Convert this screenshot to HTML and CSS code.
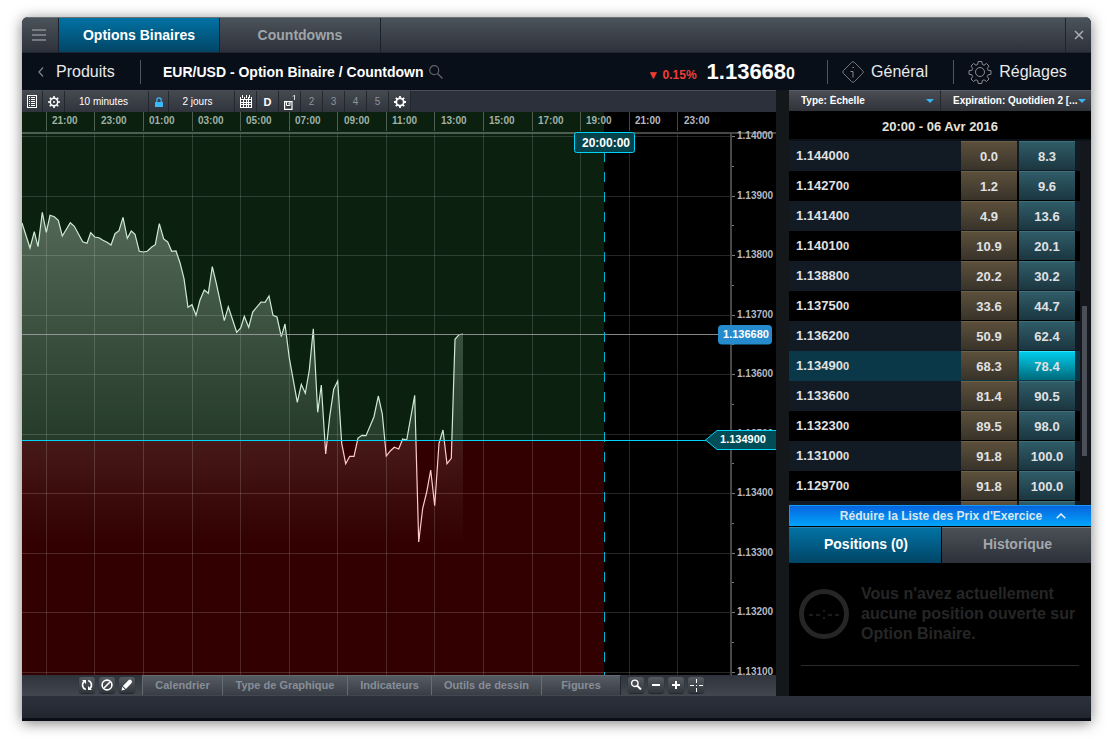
FILE: index.html
```html
<!DOCTYPE html>
<html lang="fr">
<head>
<meta charset="utf-8">
<title>Options Binaires</title>
<link rel="stylesheet" href="styles.css">
</head>
<body>
<main class="window">
  <nav class="tabbar">
    <button class="menu" aria-label="Menu"><svg width="14" height="13" viewBox="0 0 14 13"><path d="M0 1h14M0 6h14M0 11h14" stroke="#8a8f94" stroke-width="1.6"/></svg></button>
    <button class="tab active">Options Binaires</button>
    <button class="tab">Countdowns</button>
    <button class="close" aria-label="Fermer"><svg width="10" height="10" viewBox="0 0 10 10"><path d="M1 1l8 8M9 1L1 9" stroke="#a9adb1" stroke-width="1.5"/></svg></button>
  </nav>
  <header class="header">
    <a class="back" href="#"><svg width="6" height="10" viewBox="0 0 6 10"><path d="M5 0.500L1 5l4 4.500" fill="none" stroke="#7d8288" stroke-width="1.3"/></svg>Produits</a>
    <h1 class="title">EUR/USD - Option Binaire / Countdown</h1>
    <button class="search" aria-label="Rechercher"><svg width="14" height="14" viewBox="0 0 14 14"><circle cx="5.200" cy="5.200" r="4.500" fill="none" stroke="#5e6369" stroke-width="1.2"/><path d="M8.500 8.500l5 5" stroke="#5e6369" stroke-width="1.400"/></svg></button>
    <div class="quote"><span class="change">▼ 0.15%</span><span class="price">1.13668<small>0</small></span></div>
    <button class="action general"><svg width="22" height="22" viewBox="0 0 22 22" fill="none" stroke="#777b80" stroke-width="1"><path d="M9.600 1.400q1.400-1.400 2.800 0l8.200 8.200q1.400 1.400 0 2.800l-8.200 8.200q-1.400 1.400-2.800 0l-8.200-8.200q-1.400-1.400 0-2.800z"/><path d="M8.500 10.500h2.500v6M10.500 6.500h1.500" stroke="#8a8e92"/></svg>Général</button>
    <button class="action settings"><svg width="24" height="24" viewBox="0 0 24 24" fill="none" stroke="#8a8d91" stroke-width="1"><circle cx="12" cy="12" r="4.500"/><path d="M10.200 1.500h3.600l.5 2.900 1.700.8 2.500-1.700 2.500 2.500-1.700 2.500.8 1.800 2.900.4v3.500l-2.900.6-.8 1.700 1.700 2.500-2.500 2.500-2.500-1.700-1.700.8-.5 2.900h-3.600l-.5-2.900-1.700-.8-2.500 1.700L3 19l1.700-2.500-.8-1.700-2.900-.6v-3.500l2.900-.4.8-1.800L3 6l2.500-2.500L8 5.200l1.700-.8z"/></svg>Réglages</button>
  </header>
  <div class="workspace">
    <section class="chart-panel">
      <div class="tools">
        <button class="tool list" aria-label="Liste"><svg width="10" height="13" viewBox="0 0 10 13" shape-rendering="crispEdges"><path d="M.5.5h9v12h-9z" fill="none" stroke="#fff"/><path d="M2 2.500h1M4 2.500h4M2 4.500h1M4 4.500h4M2 6.500h1M4 6.500h4M2 8.500h1M4 8.500h4M2 10.500h1M4 10.500h4" stroke="#fff"/></svg></button>
        <button class="tool" aria-label="Paramètres"><svg width="12" height="12" viewBox="0 0 12 12"><circle cx="6" cy="6" r="3.700" fill="none" stroke="#fff" stroke-width="1.500"/><circle cx="6" cy="6" r="1"  fill="#fff"/><path d="M6 0v2M6 10v2M0 6h2M10 6h2M1.800 1.800l1.400 1.400M8.800 8.800l1.400 1.400M10.200 1.800L8.800 3.200M3.200 8.800l-1.400 1.400" stroke="#fff" stroke-width="1.600"/></svg></button>
        <button class="tool interval">10 minutes</button>
        <button class="tool lock" aria-label="Verrouiller"><svg width="8" height="10" viewBox="0 0 8 10"><path d="M1.800 6V3a2.200 2.200 0 0 1 4.400 0v3" fill="none" stroke="#3bb8fa" stroke-width="1.200"/><path d="M0 5h8v5H0z" fill="#3bb8fa"/></svg></button>
        <button class="tool period">2 jours</button>
        <button class="tool" aria-label="Calendrier"><svg width="12" height="13" viewBox="0 0 12 13" shape-rendering="crispEdges"><path d="M0 2h12v11H0z" fill="#fff"/><path d="M1 0h3v4H1zM5 0h3v4H5zM9 0h2v4H9z" fill="#3a3e46"/><path d="M2 0h1v3H2zM6 0h1v3H6zM9 0h1v3H9zM0 4h12v1H0z" fill="#fff"/><path d="M1 5h2v2H1zM4 5h2v2H4zM7 5h1v2H7zM9 5h2v2H9zM1 8h2v1H1zM4 8h2v1H4zM7 8h1v1H7zM9 8h2v1H9zM1 10h2v2H1zM4 10h2v2H4zM7 10h1v2H7zM9 10h2v2H9z" fill="#3a3e46"/></svg></button>
        <button class="tool bold">D</button>
        <button class="tool" aria-label="Disposition 1"><svg width="12" height="16" viewBox="0 0 12 16"><path d="M.6 7.600h7.400v7.800H.6z" fill="none" stroke="#fff" stroke-width="1.200"/><path d="M2.500 8v3.500h3.500V8M5 9v1.500" fill="none" stroke="#fff"/><path d="M9 2.500l1.500-1.500v5" fill="none" stroke="#d5d7da"/></svg></button>
        <button class="tool dim">2</button>
        <button class="tool dim">3</button>
        <button class="tool dim">4</button>
        <button class="tool dim">5</button>
        <button class="tool" aria-label="Options"><svg width="12" height="12" viewBox="0 0 12 12"><circle cx="6" cy="6" r="3.700" fill="none" stroke="#fff" stroke-width="1.800"/><path d="M6 0v2M6 10v2M0 6h2M10 6h2M1.800 1.800l1.400 1.400M8.800 8.800l1.400 1.400M10.200 1.800L8.800 3.200M3.200 8.800l-1.400 1.400" stroke="#fff" stroke-width="1.800"/></svg></button>
      </div>
      <svg class="chart" viewBox="22 112 754 563" role="img" aria-label="EUR/USD">
        <defs>
          <linearGradient id="area" gradientUnits="userSpaceOnUse" x1="0" y1="212" x2="0" y2="545"><stop offset="0" stop-color="#f0fff0" stop-opacity=".32"/><stop offset=".685" stop-color="#e8ffe8" stop-opacity=".12"/><stop offset=".685" stop-color="#fff" stop-opacity=".1"/><stop offset="1" stop-color="#fff" stop-opacity="0"/></linearGradient>
          <linearGradient id="line" gradientUnits="userSpaceOnUse" x1="0" y1="0" x2="0" y2="880"><stop offset=".5" stop-color="#cdebd2"/><stop offset=".5" stop-color="#ffcaca"/></linearGradient>
        </defs>
        <rect x="22" y="112" width="754" height="563" fill="#000"/>
        <rect x="22" y="112" width="582" height="328" fill="#0b200f"/>
        <rect x="22" y="440" width="582" height="235" fill="#320000"/>
        <path class="grid" d="M46.500 134v541M94.500 134v541M143.500 134v541M192.500 134v541M240.500 134v541M289.500 134v541M337.500 134v541M386.500 134v541M434.500 134v541M483.500 134v541M532.500 134v541M580.500 134v541M629.500 134v541M677.500 134v541M22 136.500h708M22 196.500h708M22 255.500h708M22 315.500h708M22 374.500h708M22 434.500h708M22 493.500h708M22 553.500h708M22 612.500h708M22 672.500h708"/>
        <path class="topticks" d="M46.500 112v19M94.500 112v19M143.500 112v19M192.500 112v19M240.500 112v19M289.500 112v19M337.500 112v19M386.500 112v19M434.500 112v19M483.500 112v19M532.500 112v19M580.500 112v19M629.500 112v19M677.500 112v19"/>
        <path class="axis" d="M22 133h754M731 133v542"/>
        <path class="ticks" d="M732 136.500h3M732 166.500h2M732 196.500h3M732 225.500h2M732 255.500h3M732 285.500h2M732 315.500h3M732 344.500h2M732 374.500h3M732 404.500h2M732 434.500h3M732 463.500h2M732 493.500h3M732 523.500h2M732 553.500h3M732 582.500h2M732 612.500h3M732 642.500h2M732 672.500h3"/>
        <g class="times">
          <text x="52" y="124">21:00</text><text x="101" y="124">23:00</text><text x="149" y="124">01:00</text><text x="198" y="124">03:00</text><text x="246" y="124">05:00</text><text x="295" y="124">07:00</text><text x="344" y="124">09:00</text><text x="392" y="124">11:00</text><text x="441" y="124">13:00</text><text x="489" y="124">15:00</text><text x="538" y="124">17:00</text><text x="586" y="124">19:00</text><text x="635" y="124" class="pale">21:00</text><text x="684" y="124" class="pale">23:00</text>
        </g>
        <g class="prices">
          <text x="737" y="139">1.14000</text><text x="737" y="199">1.13900</text><text x="737" y="258">1.13800</text><text x="737" y="318">1.13700</text><text x="737" y="377">1.13600</text><text x="737" y="437">1.13500</text><text x="737" y="496">1.13400</text><text x="737" y="556">1.13300</text><text x="737" y="615">1.13200</text><text x="737" y="675">1.13100</text>
        </g>
        <path fill="url(#area)" d="M22 545L22 223 30 248 34.300 231.700 38 246.700 42.300 212.300 46.300 232.300 50 215.300 54.300 216.700 58.300 220.300 62.300 236 70.300 222.700 74.300 226.300 82.700 241.700 87 243.300 90.700 232.700 94.700 237 99 237.700 103 240.300 107 242.300 111 245 115 233.700 119 230.700 123 217.300 127.300 238.300 131.300 231 135 234.300 139.300 251.300 143.300 252 147.300 251.300 151.700 247 155.300 244.700 159.300 223.700 163.700 239 167.700 242 171.700 251.300 176 251 180 262.700 184 278.700 188 307.300 192 304.700 196 315.300 200 300 204.300 290 208.300 293.300 212.300 266.700 216.300 283.300 224.300 320.700 228.300 306.700 236.700 332.300 240.700 328 244.300 316.300 248.700 327.300 252.700 312 261 302 265 302.300 269 296 273 315.300 277 317 281.300 336.700 285 324 289.300 358 297.300 402.300 301.300 384.300 305.300 393.300 309.300 370 313.300 328.700 317.700 412.300 321.300 385 325.700 454 329.700 416.700 333.700 389.300 337.700 381 341.700 443.300 345.700 463.700 349.700 456.300 354 456.300 358 438 362 435.300 366 435.700 374 416.700 378.300 396 382.300 414 386.300 456 390.300 451 394.300 447.300 398.700 449 402.700 439 406.700 440 414.700 395.300 418.700 542 422.700 508.300 426.700 492 430.700 470 434.700 505.700 439 443.300 443 430 447 463.700 451.300 458.300 455 339.300 459 334.700 463 334V545z"/>
        <path fill="none" stroke="url(#line)" stroke-width="1.200" d="M22 223L30 248 34.300 231.700 38 246.700 42.300 212.300 46.300 232.300 50 215.300 54.300 216.700 58.300 220.300 62.300 236 70.300 222.700 74.300 226.300 82.700 241.700 87 243.300 90.700 232.700 94.700 237 99 237.700 103 240.300 107 242.300 111 245 115 233.700 119 230.700 123 217.300 127.300 238.300 131.300 231 135 234.300 139.300 251.300 143.300 252 147.300 251.300 151.700 247 155.300 244.700 159.300 223.700 163.700 239 167.700 242 171.700 251.300 176 251 180 262.700 184 278.700 188 307.300 192 304.700 196 315.300 200 300 204.300 290 208.300 293.300 212.300 266.700 216.300 283.300 224.300 320.700 228.300 306.700 236.700 332.300 240.700 328 244.300 316.300 248.700 327.300 252.700 312 261 302 265 302.300 269 296 273 315.300 277 317 281.300 336.700 285 324 289.300 358 297.300 402.300 301.300 384.300 305.300 393.300 309.300 370 313.300 328.700 317.700 412.300 321.300 385 325.700 454 329.700 416.700 333.700 389.300 337.700 381 341.700 443.300 345.700 463.700 349.700 456.300 354 456.300 358 438 362 435.300 366 435.700 374 416.700 378.300 396 382.300 414 386.300 456 390.300 451 394.300 447.300 398.700 449 402.700 439 406.700 440 414.700 395.300 418.700 542 422.700 508.300 426.700 492 430.700 470 434.700 505.700 439 443.300 443 430 447 463.700 451.300 458.300 455 339.300 459 334.700 463 334"/>
        <path d="M22 334.500h698" stroke="#a0a0a4" stroke-opacity=".85"/>
        <path d="M604.500 152v523" stroke="#00b4d4" stroke-dasharray="10 10"/>
        <path d="M22 440.500h684" stroke="#00d4fa"/>
        <rect x="574.500" y="132.500" width="60" height="20" rx="2" fill="#05434c" stroke="#00d4fa"/>
        <text class="tag big" x="606" y="147">20:00:00</text>
        <rect x="718" y="325" width="54" height="19.500" rx="4" fill="#258bcd"/>
        <text class="tag" x="746" y="338">1.136680</text>
        <path d="M776 430.500h-59l-11.500 9.500 11.500 9.500h59" fill="#004d58" stroke="#00d4fa"/>
        <text class="tag" x="743" y="443">1.134900</text>
      </svg>
      <div class="bottombar">
        <div class="icons left">
          <button class="ibtn" aria-label="Actualiser"><svg width="12" height="12" viewBox="0 0 12 12" fill="none" stroke="#fff" stroke-width="1.700"><path d="M4.800 10.500A4.700 4.700 0 0 1 3 2.500M7.200 1.500A4.700 4.700 0 0 1 9 9.500"/><path d="M1 1h4v4zM11 11H7V7z" fill="#fff" stroke="none"/></svg></button>
          <button class="ibtn" aria-label="Effacer"><svg width="12" height="12" viewBox="0 0 12 12" fill="none" stroke="#fff" stroke-width="1.600"><circle cx="6" cy="6" r="4.900"/><path d="M3 9l6-6"/></svg></button>
          <button class="ibtn" aria-label="Dessiner"><svg width="12" height="12" viewBox="0 0 12 12" fill="#fff"><path d="M.5 11.500l.8-3.700 2.900 2.900zM1.900 7L7.500 1.200q1.500-1.200 2.800 0t.3 2.800L5 10z"/></svg></button>
        </div>
        <button class="btab calendar">Calendrier</button>
        <button class="btab type">Type de Graphique</button>
        <button class="btab indicators">Indicateurs</button>
        <button class="btab drawing">Outils de dessin</button>
        <button class="btab figures">Figures</button>
        <div class="icons">
          <button class="ibtn" aria-label="Loupe"><svg width="12" height="12" viewBox="0 0 12 12" fill="none" stroke="#fff"><circle cx="4.800" cy="4.300" r="3.200" stroke-width="1.400"/><path d="M7 6.500l4 4" stroke-width="2"/></svg></button>
          <button class="ibtn" aria-label="Zoom arrière"><svg width="12" height="12" viewBox="0 0 12 12"><path d="M2 6h8" stroke="#fff" stroke-width="2"/></svg></button>
          <button class="ibtn" aria-label="Zoom avant"><svg width="12" height="12" viewBox="0 0 12 12"><path d="M2 6h8M6 2v8" stroke="#fff" stroke-width="2"/></svg></button>
          <button class="ibtn" aria-label="Réticule"><svg width="14" height="14" viewBox="0 0 14 14"><path d="M1 7.500h4M10 7.500h4M7.500 1v4M7.500 10v4M7 7.500h1" stroke="#fff"/></svg></button>
        </div>
      </div>
    </section>
    <aside class="side">
      <div class="filters">
        <label class="filter"><select aria-label="Type"><option>Type: Échelle</option></select></label>
        <label class="filter expiry"><select aria-label="Expiration"><option>Expiration: Quotidien 2 [...</option></select></label>
      </div>
      <h2 class="date">20:00 - 06 Avr 2016</h2>
      <div class="strikes">
        <table>
          <tbody>
            <tr><th scope="row">1.14400<small>0</small></th><td><button class="sell">0.0</button></td><td><button class="buy">8.3</button></td></tr>
            <tr><th scope="row">1.14270<small>0</small></th><td><button class="sell">1.2</button></td><td><button class="buy">9.6</button></td></tr>
            <tr><th scope="row">1.14140<small>0</small></th><td><button class="sell">4.9</button></td><td><button class="buy">13.6</button></td></tr>
            <tr><th scope="row">1.14010<small>0</small></th><td><button class="sell">10.9</button></td><td><button class="buy">20.1</button></td></tr>
            <tr><th scope="row">1.13880<small>0</small></th><td><button class="sell">20.2</button></td><td><button class="buy">30.2</button></td></tr>
            <tr><th scope="row">1.13750<small>0</small></th><td><button class="sell">33.6</button></td><td><button class="buy">44.7</button></td></tr>
            <tr><th scope="row">1.13620<small>0</small></th><td><button class="sell">50.9</button></td><td><button class="buy">62.4</button></td></tr>
            <tr class="selected"><th scope="row">1.13490<small>0</small></th><td><button class="sell">68.3</button></td><td><button class="buy">78.4</button></td></tr>
            <tr><th scope="row">1.13360<small>0</small></th><td><button class="sell">81.4</button></td><td><button class="buy">90.5</button></td></tr>
            <tr><th scope="row">1.13230<small>0</small></th><td><button class="sell">89.5</button></td><td><button class="buy">98.0</button></td></tr>
            <tr><th scope="row">1.13100<small>0</small></th><td><button class="sell">91.8</button></td><td><button class="buy">100.0</button></td></tr>
            <tr><th scope="row">1.12970<small>0</small></th><td><button class="sell">91.8</button></td><td><button class="buy">100.0</button></td></tr>
            <tr><th scope="row"></th><td><button class="sell" aria-label="Vente"></button></td><td><button class="buy" aria-label="Achat"></button></td></tr>
          </tbody>
        </table>
        <div class="scroll"><div class="thumb"></div></div>
      </div>
      <button class="collapse">Réduire la Liste des Prix d'Exercice<svg width="10" height="6" viewBox="0 0 10 6"><path d="M.7 5.300L5 1l4.300 4.300" fill="none" stroke="#e8f0fa" stroke-width="1.500"/></svg></button>
      <div class="ptabs">
        <button class="ptab active">Positions (0)</button>
        <button class="ptab">Historique</button>
      </div>
      <div class="empty">
        <div class="message">
          <svg width="50" height="50" viewBox="0 0 50 50" fill="none" stroke="#262626"><circle cx="25" cy="25" r="22.500" stroke-width="5"/><path d="M10 26h4M17 26h4M29 26h4M36 26h4M24 22h2M24 29h2" stroke-width="1.500"/></svg>
          <p>Vous n'avez actuellement aucune position ouverte sur Option Binaire.</p>
        </div>
      </div>
    </aside>
  </div>
  <footer class="footer"></footer>
</main>
</body>
</html>
```
FILE: styles.css
```css
* { box-sizing: border-box; }
body {
  margin: 0;
  padding: 17px 22px 18px;
  background: #fff;
  font-family: "Liberation Sans", Arial, sans-serif;
}
button {
  display: flex;
  align-items: center;
  justify-content: center;
  margin: 0;
  padding: 0;
  border: 0;
  background: none;
  font: inherit;
  color: inherit;
}
svg { display: block; flex: none; }
.window {
  border-radius: 6px 6px 0 0;
  overflow: hidden;
  background: #080e16;
  box-shadow: 0 2px 14px rgba(0, 0, 0, .5);
}
.tabbar {
  display: flex;
  height: 36px;
  background: linear-gradient(#4b535a, #2d313b);
  border-top: 1px solid #6b7074;
  border-bottom: 1px solid #1d2531;
  font-size: 14px;
  font-weight: bold;
}
.menu { width: 37px; padding-right: 3px; border-right: 1px solid #1a2230; }
.tab {
  width: 161px;
  border-right: 1px solid #1a2230;
  color: #a0a4a8;
}
.tab.active { background: linear-gradient(#0272a3, #014566); color: #fff; }
.close { width: 26px; margin-left: auto; border-left: 1px solid #1f2530; }
.header {
  display: flex;
  align-items: center;
  height: 37px;
  background: #080f18;
  color: #fff;
}
.back {
  display: flex;
  align-items: center;
  gap: 12px;
  width: 119px;
  height: 24px;
  padding-left: 16px;
  border-right: 1px solid #50565d;
  font-size: 16px;
  color: #e8eaec;
  text-decoration: none;
}
.title { margin: 0 5px 0 22px; font-size: 14px; white-space: nowrap; }
.quote { display: flex; align-items: baseline; gap: 10px; margin-left: auto; font-weight: bold; }
.change { font-size: 12px; color: #f23e32; }
.price { font-size: 22px; }
.price small { font-size: 16px; }
.action {
  gap: 7px;
  height: 24px;
  border-left: 1px solid #50565d;
  font-size: 16px;
  color: #e8eaec;
}
.general { width: 126px; margin-left: 32px; padding-right: 11px; }
.settings { width: 138px; padding-right: 10px; }
.workspace { display: flex; background: #14181b; }
.chart-panel { flex: 1; min-width: 0; }
.tools {
  display: flex;
  height: 22px;
  background: #2b303a;
  border-top: 1px solid #484d56;
  font-size: 10px;
  color: #fff;
}
.tool {
  width: 22px;
  background: linear-gradient(#454950, #30343d);
  border-right: 1px solid #23272e;
}
.tool.list { width: 21px; }
.tool.lock { width: 20px; }
.tool.interval { width: 84px; padding-right: 6px; }
.tool.period { width: 66px; padding-right: 8px; }
.tool.bold { font-size: 11px; font-weight: bold; }
.tool.dim { color: #8f9399; }
.chart { width: 100%; height: auto; font-size: 10px; font-weight: bold; }
.grid { stroke: #fff; stroke-opacity: .15; fill: none; }
.topticks { stroke: #fff; stroke-opacity: .28; fill: none; }
.axis { stroke: #fff; stroke-opacity: .28; stroke-width: 2; fill: none; }
.ticks { stroke: #77797c; }
.times { fill: #9fb1a6; }
.pale, .prices { fill: #b3b9c3; }
.tag { fill: #fff; font-size: 11px; text-anchor: middle; }
.tag.big { font-size: 12px; }
.bottombar {
  display: flex;
  height: 21px;
  background: linear-gradient(#2f343c, #434850);
  font-size: 11px;
  font-weight: bold;
  color: #878e97;
}
.icons { display: flex; align-items: center; gap: 4px; height: 20px; padding-left: 7px; }
.icons.left { width: 120px; padding-left: 57px; }
.ibtn {
  width: 16px;
  height: 16px;
  border-radius: 3px;
  background: linear-gradient(#555a61, #30343b);
  box-shadow: 0 1px 1px #22262c;
}
.btab {
  height: 20px;
  padding-bottom: 2px;
  background: linear-gradient(#555b63, #383d46);
  border-left: 1px solid #666c74;
  border-top: 1px solid #666c74;
}
.calendar { width: 80px; }
.type { width: 125px; }
.indicators { width: 84px; }
.drawing { width: 110px; }
.figures { width: 80px; border-right: 1px solid #23272e; }
.side {
  display: flex;
  flex-direction: column;
  width: 302px;
  margin-left: 13px;
  background: #000;
}
.filters { display: flex; height: 21px; }
.filter {
  display: flex;
  align-items: center;
  position: relative;
  width: 152px;
  background: linear-gradient(#4a4d53, #303339);
  border-top: 1px solid #5c6066;
  border-right: 1px solid #23272e;
}
.filter.expiry { width: 150px; border-right: 0; }
.filter::after {
  content: "";
  position: absolute;
  right: 6px;
  top: 8px;
  border: 4px solid transparent;
  border-top-color: #35b5f5;
  border-bottom: 0;
}
.filter.expiry::after { right: 5px; }
.filter select {
  width: 100%;
  padding: 0 0 1px 12px;
  appearance: none;
  border: 0;
  background: none;
  color: #fff;
  font: bold 10px "Liberation Sans", Arial, sans-serif;
}
.date {
  height: 30px;
  margin: 0;
  border-bottom: 2px solid #0b1118;
  font-size: 13px;
  line-height: 31px;
  text-align: center;
  color: #e4e2dc;
}
.strikes { display: flex; height: 364px; overflow: hidden; background: #14171b; }
.strikes table {
  flex: none;
  width: 291px;
  table-layout: fixed;
  border-collapse: collapse;
  font-size: 13px;
  font-weight: bold;
  color: #e0e1e2;
}
tr { display: grid; grid-template-columns: 1fr 56px 56px; column-gap: 2px; height: 30px; padding-right: 5px; background: #000; }
tr:nth-child(odd) { background: #121b24; }
tr.selected { background: #0b3848; }
th { padding: 0 0 0 7px; line-height: 30px; text-align: left; }
th small { font-size: 11px; }
td { padding: 0; }
td button { width: 56px; height: 29px; border-top: 1px solid; }
.sell { background: linear-gradient(#5c503b, #38332a); border-top-color: #6f6148; }
.buy { background: linear-gradient(#2f5c68, #1b3640); border-top-color: #40707b; }
.selected .buy { background: linear-gradient(#00cdec, #00697a); border-top-color: #30e4ff; }
.scroll { flex: 1; padding: 165px 4px 0 2px; }
.thumb { height: 150px; background: #4b4f58; }
.collapse {
  gap: 14px;
  height: 21px;
  padding-left: 25px;
  background: linear-gradient(#0765df, #02a4fb);
  border: 1px solid #139afa;
  border-width: 1px 0 0 1px;
  font-size: 12px;
  font-weight: bold;
  color: #dce6f0;
}
.ptabs { display: flex; height: 37px; padding-top: 1px; gap: 1px; font-size: 14px; font-weight: bold; }
.ptab {
  flex: 1;
  padding: 0 0 3px 2px;
  background: linear-gradient(#4c5056, #2c313a);
  border-top: 1px solid #767a7e;
  color: #a4a8ab;
}
.ptab.active { flex: none; width: 152px; background: linear-gradient(#0272a3, #014566); border-top-color: #2c87ad; color: #fff; }
.empty { flex: 1; padding: 20px 12px 0; }
.message { display: flex; align-items: center; gap: 12px; height: 82px; margin-left: -2px; padding-bottom: 20px; }
.message p { margin: 0; font-size: 16px; font-weight: bold; line-height: 20px; color: #262626; }
.empty::after { content: ""; display: block; border-top: 1px solid #2a2a2a; }
.footer {
  height: 25px;
  background: linear-gradient(#2b313c, #23262e);
  border-bottom: 3px solid #090d16;
}
```
